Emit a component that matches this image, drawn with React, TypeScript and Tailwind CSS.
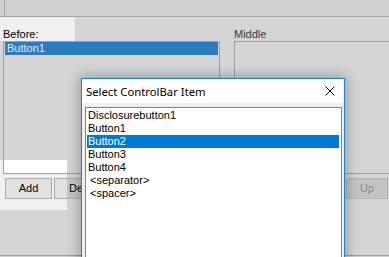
export default function App() {
  const items = ["Disclosurebutton1", "Button1", "Button2", "Button3", "Button4", "<separator>", "<spacer>"];
  return (
    <div className="relative w-[389px] h-[257px] overflow-hidden bg-[#d5d5d5] font-['Liberation_Sans',Arial,sans-serif] text-[11px] leading-[13px] text-black flex flex-col">
      {/* top bar */}
      <div className="h-[17px] shrink-0 bg-[#cfcfcf] border-b border-[#a6a6a6] flex">
        <div className="ml-[4px] border-l border-[#a6a6a6]" />
      </div>
      {/* labels */}
      <div className="h-[24px] shrink-0 flex leading-[15px]">
        <div className="w-[75px] bg-[#f0f0f0] pl-[3px] pt-[10px]">Before:</div>
        <div className="ml-[159px] pt-[10px] text-[#3a3a3a]">Middle</div>
      </div>
      {/* lists */}
      <div className="h-[133px] shrink-0 flex">
        <div className="w-[3px] flex flex-col">
          <div className="flex-1" />
          <div className="h-[14px] bg-[#f0f0f0]" />
        </div>
        <div className="w-[217px] border border-[#a0a0a0] flex flex-col">
          <div className="h-[13px] mx-[1px] bg-[#2b7bbe] text-[#e4ebf2] pl-[2px]">Button1</div>
          <div className="flex-1" />
          <div className="h-[13px] bg-[linear-gradient(to_right,#ffffff_63px,transparent_63px)]" />
        </div>
        <div className="ml-[14px] flex-1 border border-r-0 border-[#a0a0a0]" />
      </div>
      {/* buttons */}
      <div className="h-[36px] shrink-0 flex items-start pt-[4px] bg-[linear-gradient(to_right,#f0f0f0_67px,transparent_67px)]">
        <div className="ml-[5px] w-[47px] h-[21px] border border-[#adadad] bg-[#e1e1e1] flex items-center justify-center">Add</div>
        <div className="ml-[2px] w-[62px] h-[21px] border border-[#adadad] bg-[linear-gradient(to_right,#e1e1e1_12px,#c6c6c6_12px)] flex items-center justify-center">Delete</div>
        <div className="ml-auto mr-[1px] w-[42px] h-[21px] border border-[#b5b5b5] bg-[#c4c4c4] text-[#8c8c8c] flex items-center justify-center">Up</div>
      </div>
      <div className="flex-1" />
      <div className="h-[2px] shrink-0 border-t border-[#9e9e9e] bg-[#cfcfcf]" />

      {/* dialog */}
      <div className="absolute left-[81px] top-[78px] w-[264px] h-[200px] border border-[#1883d7] bg-[#f0f0f0] shadow-[0_0_12px_2px_rgba(0,0,0,0.28)] flex flex-col">
        <div className="h-[24px] shrink-0 bg-white flex items-center pl-[4px] font-['Noto_Sans',sans-serif] text-[11.3px] leading-[15px]">
          <span>Select ControlBar Item</span>
          <svg className="ml-auto mr-[9px]" width="10" height="10" viewBox="0 0 10 10">
            <path d="M0.5 0.5 L9.5 9.5 M9.5 0.5 L0.5 9.5" stroke="#000" strokeWidth="1" fill="none" />
          </svg>
        </div>
        <div className="pt-[4px] pl-[3px]">
          <div className="w-[257px] h-[160px] bg-white border border-[#828282] p-[1px]">
            {items.map((it, i) => (
              <div
                key={it}
                className={
                  i === 2
                    ? "h-[13px] pl-[1px] mr-[1px] bg-[#0078d7] text-white"
                    : it.startsWith("<")
                    ? "h-[13px] pl-[3px]"
                    : "h-[13px] pl-[1px]"
                }
              >
                {it}
              </div>
            ))}
          </div>
        </div>
      </div>
    </div>
  );
}
